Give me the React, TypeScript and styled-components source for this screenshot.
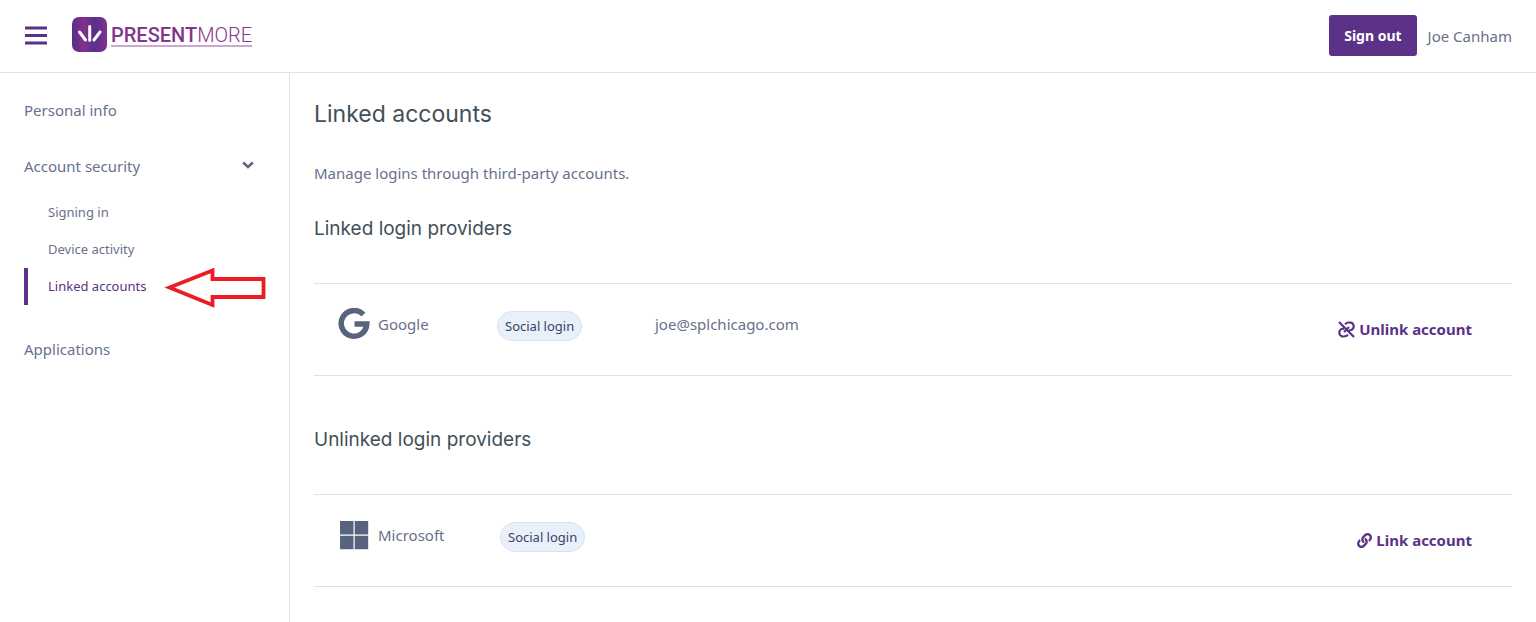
import React from "react";
import styled, { createGlobalStyle } from "styled-components";
import { FaLink } from "react-icons/fa";

const purple = "#5b3287";
const slate = "#68718b";
const iconSlate = "#58637f";
const line = "#e0e1e3";
const bodyFont = '"Noto Sans", "Open Sans", sans-serif';
const headingFont = 'Inter, "Noto Sans", sans-serif';

const GlobalStyle = createGlobalStyle`
  * { box-sizing: border-box; }
  body {
    margin: 0;
    background: #fff;
    color: ${slate};
    font-family: ${bodyFont};
    font-size: 15px;
    line-height: 24px;
  }
`;

const Page = styled.div`
  display: flex;
  flex-direction: column;
  min-height: 100vh;
`;

const Header = styled.header`
  display: flex;
  align-items: center;
  padding: 15px 24px 16px;
  border-bottom: 1px solid ${line};
`;

const MenuButton = styled.button`
  display: flex;
  padding: 0;
  margin-right: 24px;
  border: 0;
  background: none;
  cursor: pointer;
`;

const Brand = styled.a`
  display: flex;
  align-items: center;
  gap: 4px;
  padding-bottom: 2px;
  text-decoration: none;
`;

const Wordmark = styled.span`
  padding-top: 2px;
  border-bottom: 2px solid #cda6d1;
  color: #84358e;
  font-family: Roboto, sans-serif;
  font-size: 20px;
  font-weight: 500;
  line-height: 20px;
`;

const Light = styled.span`
  font-weight: 300;
`;

const UserArea = styled.div`
  display: flex;
  align-items: center;
  gap: 11px;
  margin-left: auto;
`;

const SignOut = styled.button`
  padding: 9px 15px 8px;
  border: 0;
  border-radius: 3px;
  background: ${purple};
  color: #fff;
  font: 700 14px/24px ${bodyFont};
  cursor: pointer;
`;

const Body = styled.div`
  display: flex;
  flex: 1;
`;

const Sidebar = styled.nav`
  flex: 0 0 290px;
  padding: 16px 24px;
  border-right: 1px solid ${line};
`;

const NavList = styled.ul`
  margin: 0;
  padding: 0;
  list-style: none;
`;

const SubList = styled(NavList)`
  padding: 2px 0 23px;
`;

const NavLink = styled.a`
  display: block;
  padding: 9px 0 23px;
  color: inherit;
  text-decoration: none;
`;

const NavToggle = styled.button`
  display: flex;
  align-items: center;
  justify-content: space-between;
  width: 100%;
  padding: 9px 11px 14px 0;
  border: 0;
  background: none;
  color: inherit;
  font: inherit;
  cursor: pointer;
`;

const SubItem = styled.li`
  position: relative;
`;

const SubLink = styled.a<{ $active?: boolean }>`
  display: block;
  padding: 6px 0 7px 20px;
  border-left: 4px solid ${(p) => (p.$active ? purple : "transparent")};
  color: ${(p) => (p.$active ? purple : "inherit")};
  font-size: 13px;
  text-decoration: none;
`;

const Pointer = styled.svg`
  position: absolute;
  top: 0;
  left: 140px;
`;

const Main = styled.main`
  flex: 1;
  min-width: 0;
  padding: 24px;
`;

const Title = styled.h1`
  margin: 0 0 30px;
  color: #434f58;
  font: 400 23px/34px ${headingFont};
`;

const Intro = styled.p`
  margin: 0 0 29px;
`;

const SectionTitle = styled.h2`
  margin: 0 0 39px;
  color: #434f58;
  font: 400 19px/30px ${headingFont};
`;

const ProviderList = styled.ul`
  margin: 0 0 49px;
  padding: 0;
  border-top: 1px solid ${line};
  list-style: none;

  &:last-child {
    margin-bottom: 0;
  }
`;

const ProviderRow = styled.li<{ $nameWidth: number }>`
  display: grid;
  grid-template-columns: ${(p) => p.$nameWidth}px 158px 1fr auto;
  align-items: center;
  padding: 23px 40px 34px 24px;
  border-bottom: 1px solid ${line};
`;

const Provider = styled.span`
  display: flex;
  align-items: center;
  gap: 8px;
`;

const Badge = styled.span`
  justify-self: start;
  margin-top: 4px;
  padding: 2px 7px;
  border: 1px solid #d3e5f3;
  border-radius: 15px;
  background: #e9f0f9;
  color: #35456a;
  font-size: 13px;
`;

const AccountButton = styled.button`
  display: flex;
  align-items: center;
  gap: 4px;
  margin-top: 10px;
  padding: 0;
  border: 0;
  background: none;
  color: ${purple};
  font: 700 15px/24px ${bodyFont};
  cursor: pointer;
`;

const MenuIcon = () => (
  <svg width="24" height="24" viewBox="0 0 24 24" fill={purple} aria-hidden="true">
    <path d="M1 2.500h22v3H1zM1 10h22v3H1zM1 17.500h22v3H1z" />
  </svg>
);

const LogoIcon = () => (
  <svg width="35" height="36" viewBox="0 0 35 36" aria-hidden="true">
    <defs>
      <linearGradient id="logo" x1="0" x2="1" y1="0" y2="0">
        <stop offset="0" stopColor="#55308a" />
        <stop offset="0.35" stopColor="#83318a" />
        <stop offset="0.65" stopColor="#57318b" />
        <stop offset="1" stopColor="#83328c" />
      </linearGradient>
    </defs>
    <rect width="35" height="35" rx="7" fill="url(#logo)" />
    <path d="M7.500 15l6 8M17.700 9.500v13.700M28 15l-6 8" stroke="#fff" strokeWidth="3" strokeLinecap="round" />
  </svg>
);

const ChevronIcon = () => (
  <svg width="12" height="10" viewBox="0 0 12 10" fill="none" aria-hidden="true">
    <path d="M1.200 1.500L6 5.900l4.800-4.400" stroke={iconSlate} strokeWidth="2.600" />
  </svg>
);

const GoogleIcon = () => (
  <svg width="32" height="32" viewBox="0 0 32 32" fill="none" aria-hidden="true">
    <path d="M25.400 6.700A12.800 12.800 0 1 0 28.800 16H16.500" stroke={iconSlate} strokeWidth="5.500" />
  </svg>
);

const MicrosoftIcon = () => (
  <svg width="32" height="32" viewBox="0 0 32 32" fill={iconSlate} aria-hidden="true">
    <path d="M2 2h13.500v13.500H2zM16.700 2h13.500v13.500H16.700zM2 16.700h13.500v13.500H2zM16.700 16.700h13.500v13.500H16.700z" />
  </svg>
);

const UnlinkIcon = () => (
  <svg width="17" height="17" viewBox="0 0 17 17" fill="none" stroke="currentColor" strokeWidth="2.200" aria-hidden="true">
    <path d="M1 1l15 15M7 3.200C8.500 1.600 11 1.300 13 1.700c2.500.5 3.400 4 2 6-1 1.500-2.500 1.800-4 1.300M10 13.800C8.500 15.400 6 15.700 4 15.300c-2.500-.5-3.400-4-2-6 1-1.500 2.500-1.800 4-1.300M6 11l5-5" />
  </svg>
);

const App = () => (
  <Page>
    <GlobalStyle />
    <Header>
      <MenuButton aria-label="Toggle navigation">
        <MenuIcon />
      </MenuButton>
      <Brand href="#">
        <LogoIcon />
        <Wordmark>PRESENT<Light>MORE</Light></Wordmark>
      </Brand>
      <UserArea>
        <SignOut>Sign out</SignOut>
        <span>Joe Canham</span>
      </UserArea>
    </Header>
    <Body>
      <Sidebar aria-label="Account">
        <NavList>
          <li><NavLink href="#personal">Personal info</NavLink></li>
          <li>
            <NavToggle aria-expanded="true">
              Account security
              <ChevronIcon />
            </NavToggle>
            <SubList>
              <SubItem><SubLink href="#signin">Signing in</SubLink></SubItem>
              <SubItem><SubLink href="#devices">Device activity</SubLink></SubItem>
              <SubItem>
                <SubLink href="#linked" $active aria-current="page">Linked accounts</SubLink>
                <Pointer width="104" height="42" viewBox="0 0 104 42" fill="none" aria-hidden="true">
                  <path d="M5.500 19.500L48.500 2.500v8.500h51v18h-51V37z" stroke="#ed1c24" strokeWidth="3.800" />
                </Pointer>
              </SubItem>
            </SubList>
          </li>
          <li><NavLink href="#applications">Applications</NavLink></li>
        </NavList>
      </Sidebar>
      <Main>
        <Title>Linked accounts</Title>
        <Intro>Manage logins through third-party accounts.</Intro>
        <SectionTitle>Linked login providers</SectionTitle>
        <ProviderList>
          <ProviderRow $nameWidth={159}>
            <Provider><GoogleIcon />Google</Provider>
            <Badge>Social login</Badge>
            <span>joe@splchicago.com</span>
            <AccountButton><UnlinkIcon />Unlink account</AccountButton>
          </ProviderRow>
        </ProviderList>
        <SectionTitle>Unlinked login providers</SectionTitle>
        <ProviderList>
          <ProviderRow $nameWidth={162}>
            <Provider><MicrosoftIcon />Microsoft</Provider>
            <Badge>Social login</Badge>
            <span />
            <AccountButton><FaLink />Link account</AccountButton>
          </ProviderRow>
        </ProviderList>
      </Main>
    </Body>
  </Page>
);

export default App;
